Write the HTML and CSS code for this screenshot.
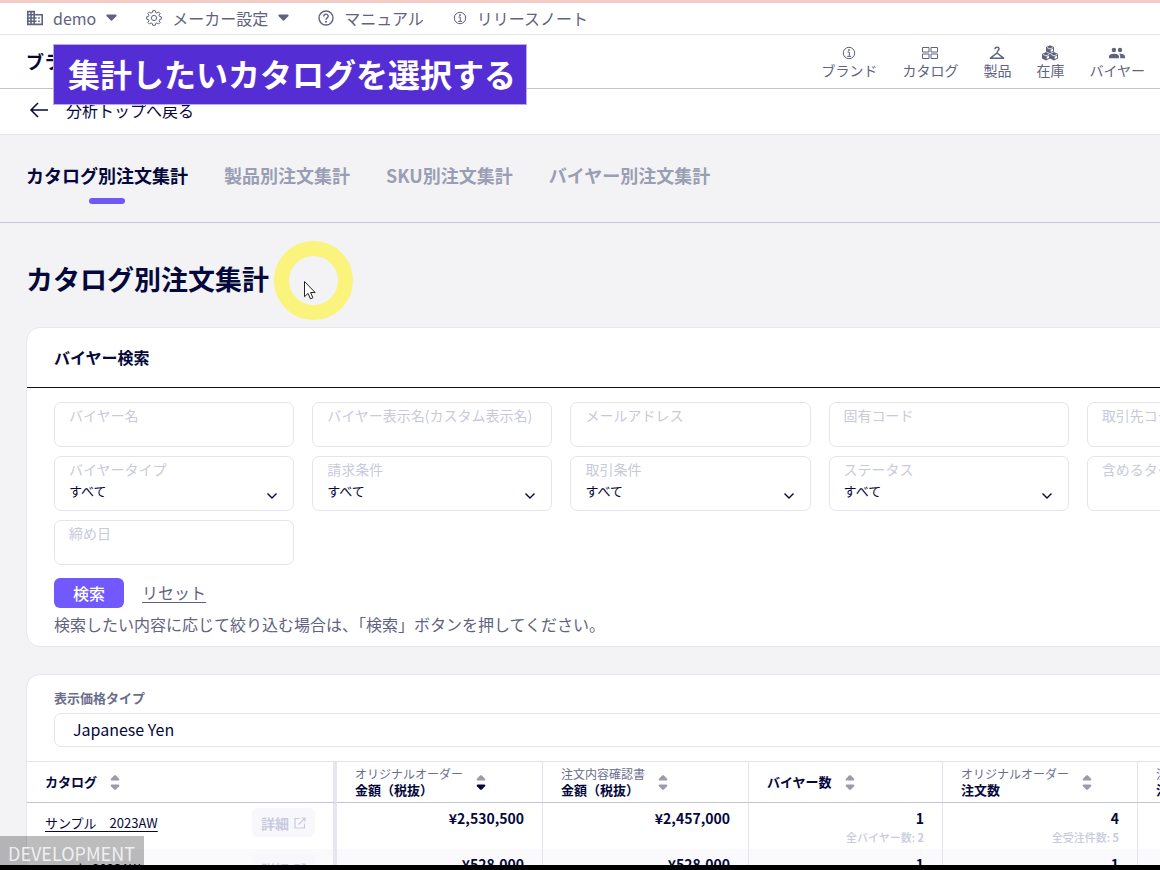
FILE: index.html
```html
<!DOCTYPE html>
<html lang="ja">
<head>
<meta charset="utf-8">
<title>カタログ別注文集計</title>
<link rel="stylesheet" href="styles.css">
</head>
<body>
<svg class="defs" aria-hidden="true">
  <symbol id="caret" viewBox="0 0 11 7"><path d="M1.600.5h7.800c1.200 0 1.600 1 .9 1.800L6.600 6.100c-.6.7-1.600.7-2.200 0L.7 2.300C0 1.500.4.5 1.600.5z"/></symbol>
  <symbol id="sort-up" viewBox="0 0 10 6"><path d="M4 .6c.6-.6 1.400-.6 2 0l3 3.100c.7.8.3 1.800-.8 1.800H1.800C.7 5.500.3 4.500 1 3.700z"/></symbol>
  <symbol id="sort-down" viewBox="0 0 10 6"><path d="M4 5.400c.6.6 1.400.6 2 0l3-3.100C9.700 1.500 9.300.5 8.200.5H1.800C.7.5.3 1.500 1 2.300z"/></symbol>
  <symbol id="info" viewBox="0 0 14 14"><g fill="none" stroke="currentColor"><circle cx="7" cy="7" r="5.700"/><path d="M5.500 6h1.800v4.300M5.200 10.400h3.800"/></g><circle cx="7" cy="4" r=".9"/></symbol>
  <symbol id="chevron" viewBox="0 0 12 8"><path d="M1.500 1.500 6 6l4.500-4.500" fill="none" stroke="currentColor" stroke-width="1.400"/></symbol>
  <symbol id="external" viewBox="0 0 12 12"><path d="M5.500 1.500H1v9.500h9.500V6.500M7.500 1H11v3.500M11 1 4.500 7.500" fill="none" stroke="currentColor" stroke-width="1.200"/></symbol>
</svg>

<div class="screen">
  <nav class="topbar">
    <a href="#"><svg class="i16" viewBox="2 2 20 20"><path d="M12 7V3H2v18h20V7H12zM6 19H4v-2h2v2zm0-4H4v-2h2v2zm0-4H4V9h2v2zm0-4H4V5h2v2zm4 12H8v-2h2v2zm0-4H8v-2h2v2zm0-4H8V9h2v2zm0-4H8V5h2v2zm10 12h-8v-2h2v-2h-2v-2h2v-2h-2V9h8v10zm-2-8h-2v2h2v-2zm0 4h-2v2h2v-2z"/></svg>demo<svg class="caret"><use href="#caret"/></svg></a>
    <a href="#"><svg class="i16" viewBox="0 0 16 16"><g fill="none" stroke="currentColor" stroke-linejoin="round"><path d="M6.700.7h2.600l.4 1.900 1.200.5 1.700-1.100 1.500 1.500-1.100 1.700.5 1.200 1.800.4v2.400l-1.800.4-.5 1.200 1.100 1.700-1.500 1.500-1.700-1.100-1.200.5-.4 1.900H6.700l-.4-1.900-1.200-.5-1.700 1.100-1.500-1.500L3 10.800l-.5-1.200-1.800-.4V6.800l1.800-.4L3 5.200 1.900 3.500 3.400 2l1.700 1.100 1.200-.5z"/><circle cx="8" cy="8" r="2.600"/></g></svg>メーカー設定<svg class="caret"><use href="#caret"/></svg></a>
    <a href="#"><svg class="i16" viewBox="0 0 16 16"><g fill="none" stroke="currentColor" stroke-width="1.400"><circle cx="8" cy="8" r="7"/><path d="M5.800 6.500C5.800 3.300 10.200 3.400 10.200 6.300 10.200 7.900 8 7.900 8 9.700"/></g><circle cx="8" cy="11.800" r=".95"/></svg>マニュアル</a>
    <a href="#"><svg class="i14"><use href="#info"/></svg>リリースノート</a>
  </nav>

  <header class="header">
    <strong class="brand">ブランド</strong>
    <nav class="mainnav">
      <a href="#"><svg class="nav-icon" viewBox="0 0 16 16"><use href="#info" x="1" y="1" width="14" height="14"/></svg>ブランド</a>
      <a href="#"><svg class="nav-icon" viewBox="0 0 16 16"><path fill="none" stroke="currentColor" d="M.5 2.500h6.500v4.500H.5zM9 2.500h6.500v4.500H9zM.5 9h6.500v4.500H.5zM9 9h6.500v4.500H9z"/></svg>カタログ</a>
      <a href="#"><svg class="nav-icon" viewBox="0 0 16 16"><path fill="none" stroke="currentColor" stroke-width="1.500" stroke-linejoin="round" d="M6 4.300C6 1.500 10 1.600 10 4.100 10 5.600 8 5.500 8 8M8 8l6.600 5.200H1.400z"/></svg>製品</a>
      <a href="#"><svg class="nav-icon" viewBox="0 0 16 16"><path d="M8 .2 12 2v4.500L8 8.300 4 6.500V2zM4 7l4 1.900v4.600l-4 2-4-2V8.900zM12 7l4 1.900v4.600l-4 2-4-2V8.900z"/><path fill="none" stroke="#fff" stroke-width=".8" d="M4.900 2.500 8 4l3.200-1.500M.9 9.400 4 10.900l3.100-1.500M8.900 9.400l3.100 1.500 3.100-1.500"/><path fill="#fff" d="m8.700 4.800 2.300-1.100v2.300L8.700 7.100zM4.700 11.700 7 10.600v2.300L4.700 14zM12.700 11.700l2.300-1.100v2.300L12.700 14z"/></svg>在庫</a>
      <a href="#"><svg class="nav-icon" viewBox="0 0 16 16"><circle cx="4.900" cy="5" r="2.200"/><circle cx="11" cy="5" r="2.200"/><path d="M0 13.200v-1.700C0 9.300 3 8.700 5 8.700s5 .6 5 2.800v1.700zM11.200 13.200v-1.900c0-1-.5-1.900-1.400-2.500 2.400-.3 6.200.3 6.200 2.700v1.700z"/></svg>バイヤー</a>
    </nav>
  </header>

  <div class="backbar">
    <a href="#"><svg class="arrow" viewBox="0 0 20 16"><path d="M19 8H2M9 1 2 8l7 7" fill="none" stroke="currentColor" stroke-width="1.500"/></svg>分析トップへ戻る</a>
  </div>

  <main class="main">
    <nav class="tabs">
      <a class="tab active" href="#">カタログ別注文集計</a>
      <a class="tab" href="#">製品別注文集計</a>
      <a class="tab" href="#">SKU別注文集計</a>
      <a class="tab" href="#">バイヤー別注文集計</a>
    </nav>

    <h1 class="title">カタログ別注文集計</h1>

    <form class="card">
      <h2 class="card-title">バイヤー検索</h2>
      <div class="card-body">
        <div class="fields">
          <div class="field"><label for="f1">バイヤー名</label><input id="f1" type="text"></div>
          <div class="field"><label for="f2">バイヤー表示名(カスタム表示名)</label><input id="f2" type="text"></div>
          <div class="field"><label for="f3">メールアドレス</label><input id="f3" type="text"></div>
          <div class="field"><label for="f4">固有コード</label><input id="f4" type="text"></div>
          <div class="field"><label for="f5">取引先コード</label><input id="f5" type="text"></div>
          <div class="field"><label for="f6">バイヤータイプ</label><select id="f6"><option>すべて</option></select><svg class="chevron"><use href="#chevron"/></svg></div>
          <div class="field"><label for="f7">請求条件</label><select id="f7"><option>すべて</option></select><svg class="chevron"><use href="#chevron"/></svg></div>
          <div class="field"><label for="f8">取引条件</label><select id="f8"><option>すべて</option></select><svg class="chevron"><use href="#chevron"/></svg></div>
          <div class="field"><label for="f9">ステータス</label><select id="f9"><option>すべて</option></select><svg class="chevron"><use href="#chevron"/></svg></div>
          <div class="field"><label for="f10">含めるタグ</label><input id="f10" type="text"></div>
          <div class="field"><label for="f11">締め日</label><input id="f11" type="text"></div>
        </div>
        <div class="actions">
          <button class="search" type="submit">検索</button>
          <a class="reset" href="#">リセット</a>
        </div>
        <p class="note">検索したい内容に応じて絞り込む場合は、「検索」ボタンを押してください。</p>
      </div>
    </form>

    <section class="card">
      <div class="price">
        <label for="price">表示価格タイプ</label>
        <select id="price"><option>Japanese Yen</option></select>
      </div>
      <table class="table">
        <colgroup><col class="c-name"><col class="c-money"><col class="c-money"><col class="c-buyer"><col class="c-order"><col></colgroup>
        <thead>
          <tr>
            <th><div class="head"><span>カタログ</span><span class="sort"><svg><use href="#sort-up"/></svg><svg><use href="#sort-down"/></svg></span></div></th>
            <th><div class="head"><span><small>オリジナルオーダー</small>金額（税抜）</span><span class="sort"><svg><use href="#sort-up"/></svg><svg class="on"><use href="#sort-down"/></svg></span></div></th>
            <th><div class="head"><span><small>注文内容確認書</small>金額（税抜）</span><span class="sort"><svg><use href="#sort-up"/></svg><svg><use href="#sort-down"/></svg></span></div></th>
            <th><div class="head"><span>バイヤー数</span><span class="sort"><svg><use href="#sort-up"/></svg><svg><use href="#sort-down"/></svg></span></div></th>
            <th><div class="head"><span><small>オリジナルオーダー</small>注文数</span><span class="sort"><svg><use href="#sort-up"/></svg><svg><use href="#sort-down"/></svg></span></div></th>
            <th><div class="head"><span><small>注文内容確認書</small>注文数</span><span class="sort"><svg><use href="#sort-up"/></svg><svg><use href="#sort-down"/></svg></span></div></th>
          </tr>
        </thead>
        <tbody>
          <tr>
            <td><div class="name"><a href="#">サンプル　2023AW</a><button class="detail" type="button">詳細<svg><use href="#external"/></svg></button></div></td>
            <td>¥2,530,500</td>
            <td>¥2,457,000</td>
            <td>1<small>全バイヤー数: <b>2</b></small></td>
            <td>4<small>全受注件数: <b>5</b></small></td>
            <td></td>
          </tr>
          <tr>
            <td><div class="name"><a href="#">sample 2023AW</a><button class="detail" type="button">詳細<svg><use href="#external"/></svg></button></div></td>
            <td>¥528,000</td>
            <td>¥528,000</td>
            <td>1</td>
            <td>1</td>
            <td></td>
          </tr>
        </tbody>
      </table>
    </section>
  </main>
</div>

<div class="caption">集計したいカタログを選択する</div>
<div class="pointer"><svg viewBox="0 0 13 20"><path d="M1.500 1.500v15.200l3.600-3.300 2.300 5.400 2.500-1-2.300-5.300h4.500z" fill="#fff" stroke="#222" stroke-linejoin="round"/></svg></div>
<div class="env">DEVELOPMENT</div>
</body>
</html>
```
FILE: styles.css
```css
* { box-sizing: border-box; }
body {
  margin: 0;
  background: #000;
  color: #04083a;
  font-family: "Noto Sans CJK JP", "Noto Sans", sans-serif;
  font-size: 16px;
  overflow: hidden;
}
a { color: inherit; text-decoration: none; }
svg { display: block; fill: currentColor; flex: none; }
input, select, button { font: inherit; color: inherit; }
.defs { position: absolute; width: 0; height: 0; }

.screen {
  height: calc(100vh - 5px);
  overflow: hidden;
  background: #f3f3f6;
  border-top: 3px solid #f3cdc5;
}

.topbar {
  display: flex;
  align-items: center;
  gap: 29px;
  height: 32px;
  padding: 0 27px 2px;
  background: #fff;
  border-bottom: 1px solid #e6e6ea;
  color: #5f6380;
}
.topbar a { display: flex; align-items: center; gap: 10px; line-height: 24px; }
.i16 { width: 16px; height: 16px; }
.i14 { width: 14px; height: 14px; }
.caret { width: 11px; height: 7px; }

.header {
  display: flex;
  align-items: center;
  justify-content: space-between;
  height: 54px;
  padding: 0 15px 0 26px;
  background: #fff;
  border-bottom: 1px solid #c3c3cb;
}
.brand { padding-bottom: 2px; font-size: 18px; }
.mainnav { display: flex; gap: 25px; color: #5f6380; }
.mainnav a { display: flex; flex-direction: column; align-items: center; font-size: 14px; line-height: 18px; }
.nav-icon { width: 16px; height: 16px; }

.backbar {
  height: 46px;
  padding: 9px 29px;
  background: #fff;
  border-bottom: 1px solid #e6e6ea;
}
.backbar a { display: inline-flex; align-items: center; gap: 17px; line-height: 24px; }
.arrow { width: 20px; height: 16px; }

.main { min-width: 1381px; }
.tabs {
  display: flex;
  gap: 36px;
  padding: 27px 26px 18px;
  border-bottom: 1px solid #c6c7d6;
}
.tab { font-size: 18px; line-height: 27px; font-weight: 700; color: #9a9eb3; }
.tab::after { content: ""; display: block; width: 36px; height: 6px; margin: 9px auto 0; border-radius: 3px; }
.tab.active { color: #04083a; }
.tab.active::after { background: #6f58f5; }

.title { margin: 0; padding: 36px 26px 28px; font-size: 27px; line-height: 40px; }

.card {
  margin: 0 26px 27px;
  background: #fff;
  border: 1px solid #e6e6ee;
  border-radius: 14px;
  overflow: hidden;
}
.card-title { margin: 0; padding: 17px 27px 18px; font-size: 16px; line-height: 24px; border-bottom: 1px solid #101018; }
.card-body { padding: 14px 27px 10px; }
.fields { display: grid; grid-template-columns: repeat(5, 1fr); gap: 9px 18px; }
.field {
  position: relative;
  display: flex;
  flex-direction: column;
  padding: 2px 14px 4px;
  border: 1px solid #e4e4ea;
  border-radius: 7px;
}
.field label { font-size: 14px; line-height: 20px; color: #c8cadc; white-space: nowrap; }
.field input { width: 100%; height: 17px; padding: 0; border: 0; outline: 0; background: none; font-size: 13px; }
.field select { width: 100%; height: 27px; padding: 0 0 4px; border: 0; outline: 0; appearance: none; background: none; font-size: 13px; }
.chevron { position: absolute; right: 15px; bottom: 10px; width: 12px; height: 8px; pointer-events: none; }
.actions { display: flex; align-items: center; gap: 18px; margin-top: 13px; }
.search { width: 70px; height: 30px; padding: 0 0 1px; border: 0; border-radius: 6px; background: #7259ff; color: #fff; font-weight: 500; line-height: 24px; }
.reset { padding-bottom: 2px; color: #5f6380; text-decoration: underline; text-underline-offset: 3px; }
.note { margin: 4px 0 0; line-height: 24px; color: #5f6380; }

.price { display: flex; flex-direction: column; padding: 13px 27px 14px; }
.price label { margin-bottom: 5px; font-size: 13px; line-height: 20px; font-weight: 700; color: #6a6e8c; }
.price select { height: 34px; padding: 0 18px 2px; border: 1px solid #e4e4ea; border-radius: 7px; appearance: none; background: #fff; }

.table { width: 100%; table-layout: fixed; border-collapse: separate; border-spacing: 0; border-top: 1px solid #e4e4ea; }
.c-name { width: 310px; }
.c-money { width: 206px; }
.c-buyer { width: 194px; }
.c-order { width: 195px; }
.table th, .table td { border-right: 1px solid #e4e4ee; font-weight: 700; white-space: nowrap; }
.table th:first-child, .table td:first-child { border-right: 4px solid #e6e5f1; }
.table th { height: 41px; padding: 4px 18px; border-bottom: 1px solid #c3c4d3; font-size: 13px; line-height: 16px; text-align: left; }
.table small { display: block; }
.table th small { font-size: 12px; font-weight: 400; color: #6a6e8c; }
.head { display: flex; align-items: center; gap: 13px; }
.sort { display: flex; flex-direction: column; gap: 3px; color: #9a9cac; }
.sort svg { width: 10px; height: 6px; }
.sort .on { color: #04083a; }
.table td { height: 46px; padding: 5px 18px 3px; font-size: 14px; line-height: 20px; text-align: right; vertical-align: top; }
.table td small { font-size: 11px; line-height: 18px; font-weight: 500; color: #c8cadc; }
.table tbody tr:nth-child(even) { background: #fafafc; }
.name { display: flex; align-items: center; justify-content: space-between; }
.name a { font-size: 13px; font-weight: 400; text-decoration: underline; text-underline-offset: 3px; }
.detail { display: flex; align-items: center; gap: 5px; height: 29px; padding: 0 9px; border: 0; border-radius: 6px; background: #f8f8fc; color: #c8cadf; font-weight: 700; }
.detail svg { width: 12px; height: 12px; }

.caption {
  position: absolute;
  left: 53px;
  top: 44px;
  padding: 5px 10px 7px 14px;
  border: 1px solid #b9aaf0;
  background: #552dd5;
  color: #fff;
  font-size: 32px;
  line-height: 47px;
  font-weight: 700;
}
.pointer {
  position: absolute;
  left: 274px;
  top: 241px;
  width: 79px;
  height: 79px;
  border: 15px solid #faf37c;
  border-radius: 50%;
}
.pointer svg { position: absolute; left: 14px; top: 24px; width: 13px; height: 20px; }
.env {
  position: absolute;
  left: 0;
  bottom: 5px;
  padding: 5px 9px 0 8px;
  background: rgba(0, 0, 0, .26);
  color: rgba(255, 255, 255, .8);
  font-size: 18px;
  line-height: 24px;
}
```
